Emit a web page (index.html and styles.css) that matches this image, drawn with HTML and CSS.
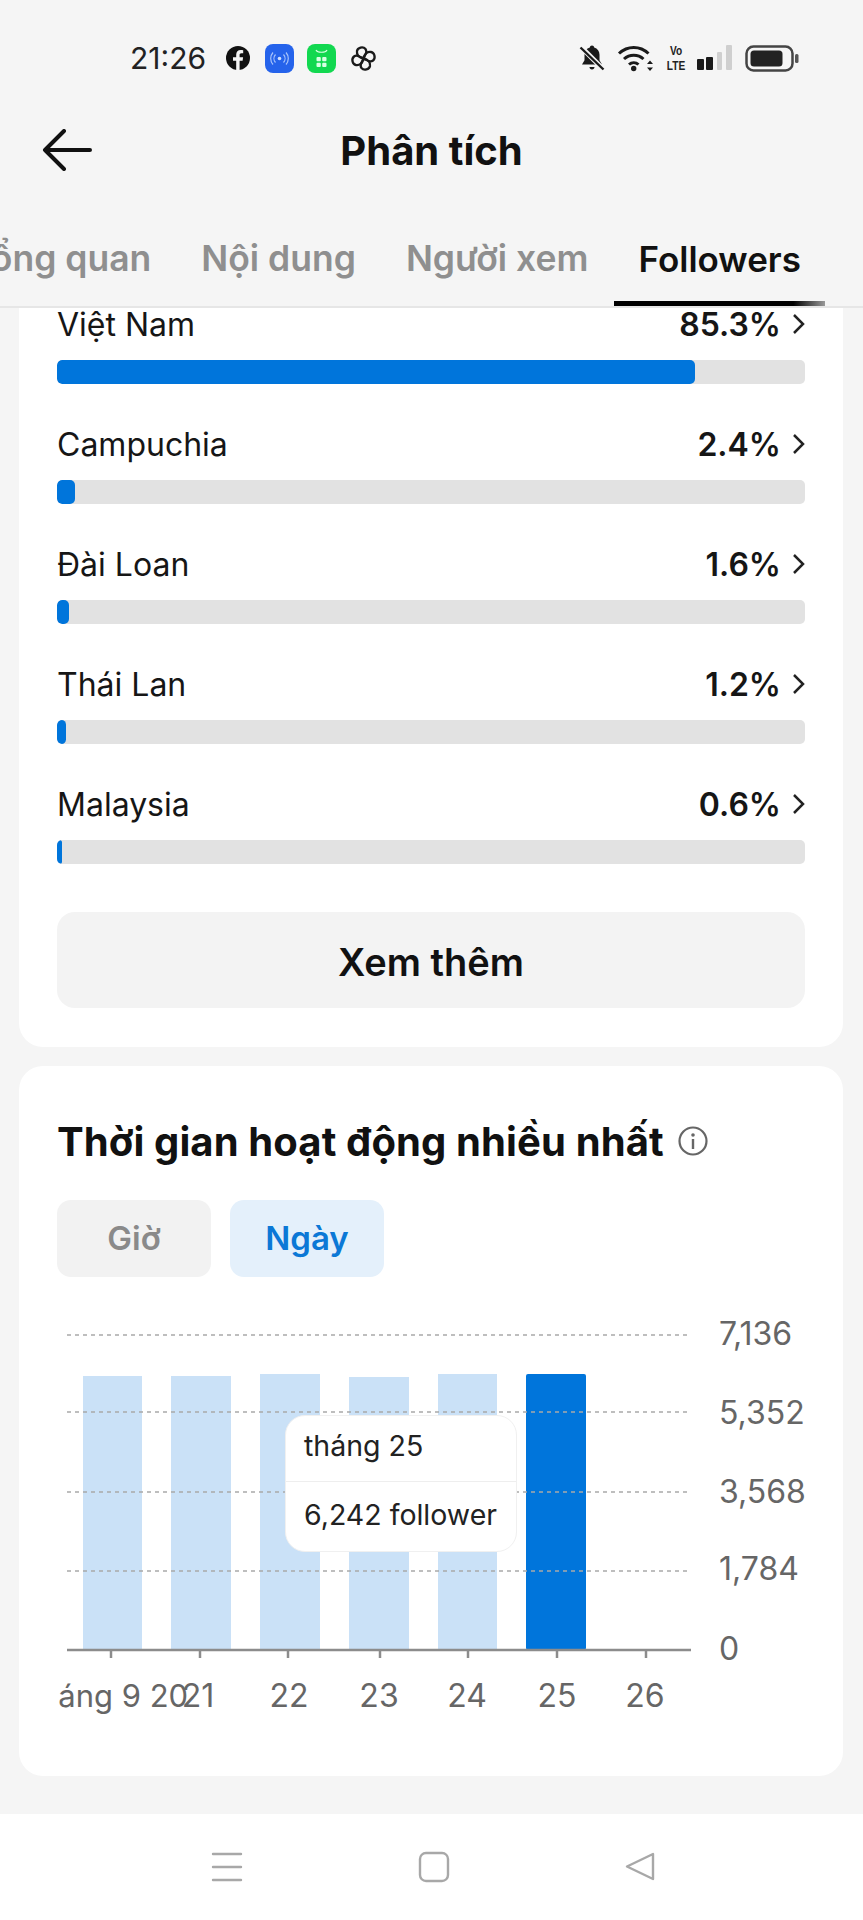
FILE: index.html
```html
<!DOCTYPE html>
<html lang="vi">
<head>
    <meta charset="UTF-8">
    <title>Phân tích</title>
    <link rel="stylesheet" href="styles.css">
</head>
<body>
<div id="phone">
    <div class="status">
        <span class="time">21:26</span>
        <svg class="ic-fb" width="24" height="24" viewBox="0 0 24 24"><circle cx="12" cy="12" r="12" fill="#111"/><path d="M13.6 24v-9.2h3l.5-3.6h-3.5V9.1c0-1.100.4-1.800 1.900-1.800h1.700V4.200c-.8-.1-1.700-.2-2.500-.2-2.800 0-4.500 1.700-4.500 4.600v2.600H7v3.600h3.200V24z" fill="#f5f5f5"/></svg>
        <svg class="ic-tile" width="29" height="29" viewBox="0 0 29 29"><rect width="29" height="29" rx="8" fill="#2563eb"/><circle cx="14.500" cy="14.500" r="1.800" fill="#cfe0ff"/><path d="M10.500 10.500a6 6 0 0 0 0 8M18.500 10.500a6 6 0 0 1 0 8M8 8.500a9 9 0 0 0 0 12M21 8.500a9 9 0 0 1 0 12" fill="none" stroke="#a9c5fb" stroke-width="1.200"/></svg>
        <svg class="ic-tile2" width="29" height="29" viewBox="0 0 29 29"><rect width="29" height="29" rx="8" fill="#12d850"/><path d="M9 6c1.500 3 9.500 3 11 0" fill="none" stroke="#d8ffe4" stroke-width="1.200"/><rect x="9.500" y="13" width="4.300" height="4.300" rx="1" fill="#d8ffe4"/><rect x="15.200" y="13" width="4.300" height="4.300" rx="1" fill="#d8ffe4"/><rect x="9.500" y="18.700" width="4.300" height="4.300" rx="1" fill="#d8ffe4"/><rect x="15.200" y="18.700" width="4.300" height="4.300" rx="1" fill="#d8ffe4"/></svg>
        <svg class="ic-pin" width="27" height="27" viewBox="0 0 27 27" fill="none" stroke="#1a1a1a" stroke-width="2.300" stroke-linejoin="round" stroke-linecap="round"><path d="M13 13C8.500 12.500 6.500 9.500 7 6c.6-3.500 6-5 8.500-2 1.800 2.300.5 5.500-2.500 9z"/><path d="M14 13c.5-4.500 3.500-6.500 7-6 3.500.6 5 6 2 8.500-2.300 1.800-5.500.5-9-2.500z"/><path d="M14 14c4.500.5 6.500 3.500 6 7-.6 3.500-6 5-8.500 2-1.800-2.300-.5-5.500 2.500-9z"/><path d="M13 14c-.5 4.500-3.500 6.500-7 6-3.500-.6-5-6-2-8.500 2.300-1.800 5.500-.5 9 2.500z"/></svg>
        <span class="status-gap"></span>
        <svg width="26" height="28" viewBox="0 0 26 28"><path d="M13 1.500c1.300 0 2 .8 2.200 1.900 3.400 1 5.300 3.700 5.300 7.300v5.500l2.500 4.300H3l2.500-4.300v-5.500c0-3.600 1.900-6.300 5.300-7.300.2-1.100.9-1.900 2.200-1.900zM10.500 23h5c0 1.500-1 2.500-2.500 2.500s-2.500-1-2.500-2.500z" fill="#1a1a1a"/><path d="M2 3l22 22" stroke="#f5f5f5" stroke-width="5"/><path d="M1.500 3.500l23 22" stroke="#1a1a1a" stroke-width="2.400"/></svg>
        <svg class="ic-wifi" width="37" height="28" viewBox="0 0 37 28" fill="none" stroke="#1a1a1a" stroke-width="3"><path d="M2 9.500c8.500-8 21-8 29.500 0"/><path d="M7 15c5.500-5 14-5 19.500 0"/><path d="M12 20.500c2.800-2.500 6.700-2.500 9.500 0"/><circle cx="16.700" cy="24.500" r="2.700" fill="#1a1a1a" stroke="none"/><path d="M33 16.500l-3 3.500h6zM33 27l-3-3.500h6z" fill="#1a1a1a" stroke="none"/></svg>
        <span class="volte"><span>Vo</span><span>LTE</span></span>
        <svg class="ic-signal" width="36" height="26" viewBox="0 0 36 26"><rect x="0" y="14" width="7" height="11" rx="1" fill="#1a1a1a"/><rect x="9" y="12" width="7" height="13" rx="1" fill="#1a1a1a"/><rect x="20" y="7" width="5" height="18" rx="1" fill="#cfcfcf"/><rect x="29" y="0" width="6" height="25" rx="1" fill="#cfcfcf"/></svg>
        <svg class="ic-batt" width="54" height="27" viewBox="0 0 54 27"><rect x="1.500" y="1.500" width="46" height="24" rx="7" fill="none" stroke="#444" stroke-width="2.500"/><rect x="5.500" y="5.500" width="32" height="16" rx="3.500" fill="#222"/><rect x="50" y="9" width="3.500" height="9" rx="1.500" fill="#555"/></svg>
    </div>

    <div class="header">
        <svg class="back" width="50" height="42" viewBox="0 0 50 42" fill="none" stroke="#111" stroke-width="4" stroke-linecap="round" stroke-linejoin="round"><path d="M22 2L3 21l19 19M3 21h45"/></svg>
        <span class="header-title">Phân tích</span>
    </div>

    <div class="tabs">
        <div class="tab">Tổng quan</div>
        <div class="tab">Nội dung</div>
        <div class="tab">Người xem</div>
        <div class="tab on">Followers</div>
    </div>

    <div class="scroll">
        <div class="card card-top">
            <ul class="rows">
                <li>
                    <div class="row-head"><span>Việt Nam</span><b>85.3%</b><svg class="chev" width="13" height="22" viewBox="0 0 13 22"><path d="M2 2l9 9-9 9"/></svg></div>
                    <div class="bar"><div class="fill" style="width:85.3%"></div></div>
                </li>
                <li>
                    <div class="row-head"><span>Campuchia</span><b>2.4%</b><svg class="chev" width="13" height="22" viewBox="0 0 13 22"><path d="M2 2l9 9-9 9"/></svg></div>
                    <div class="bar"><div class="fill" style="width:18px"></div></div>
                </li>
                <li>
                    <div class="row-head"><span>Đài Loan</span><b>1.6%</b><svg class="chev" width="13" height="22" viewBox="0 0 13 22"><path d="M2 2l9 9-9 9"/></svg></div>
                    <div class="bar"><div class="fill" style="width:12px"></div></div>
                </li>
                <li>
                    <div class="row-head"><span>Thái Lan</span><b>1.2%</b><svg class="chev" width="13" height="22" viewBox="0 0 13 22"><path d="M2 2l9 9-9 9"/></svg></div>
                    <div class="bar"><div class="fill" style="width:9px"></div></div>
                </li>
                <li>
                    <div class="row-head"><span>Malaysia</span><b>0.6%</b><svg class="chev" width="13" height="22" viewBox="0 0 13 22"><path d="M2 2l9 9-9 9"/></svg></div>
                    <div class="bar"><div class="fill" style="width:5px"></div></div>
                </li>
            </ul>
            <div class="more">Xem thêm</div>
        </div>

        <div class="card card-time">
            <div class="time-title">
                <span>Thời gian hoạt động nhiều nhất</span>
                <svg width="30" height="30" viewBox="0 0 30 30"><circle cx="15" cy="15" r="13.500" fill="none" stroke="#666" stroke-width="2.200"/><circle cx="15" cy="9" r="1.800" fill="#666"/><rect x="13.800" y="13" width="2.400" height="10" fill="#666"/></svg>
            </div>
            <div class="chips">
                <div class="chip">Giờ</div>
                <div class="chip on">Ngày</div>
            </div>
            <div class="chart">
                <svg class="plot" width="748" height="400" viewBox="57 1320 748 400">
                    <rect class="b" x="83" y="1376" width="59" height="274"/>
                    <rect class="b" x="171" y="1376" width="60" height="274"/>
                    <rect class="b" x="260" y="1374" width="60" height="276"/>
                    <rect class="b" x="349" y="1377" width="60" height="273"/>
                    <rect class="b" x="438" y="1374" width="59" height="276"/>
                    <rect class="b-on" x="526" y="1374" width="60" height="276" rx="2"/>
                    <line class="grid" x1="67" x2="688" y1="1335" y2="1335"/>
                    <line class="grid" x1="67" x2="688" y1="1412" y2="1412"/>
                    <line class="grid" x1="67" x2="688" y1="1492" y2="1492"/>
                    <line class="grid" x1="67" x2="688" y1="1571" y2="1571"/>
                    <line class="axis" x1="67" x2="691" y1="1650" y2="1650"/>
                    <line class="tick" x1="111" x2="111" y1="1650" y2="1658"/>
                    <line class="tick" x1="200" x2="200" y1="1650" y2="1658"/>
                    <line class="tick" x1="288" x2="288" y1="1650" y2="1658"/>
                    <line class="tick" x1="380" x2="380" y1="1650" y2="1658"/>
                    <line class="tick" x1="468" x2="468" y1="1650" y2="1658"/>
                    <line class="tick" x1="557" x2="557" y1="1650" y2="1658"/>
                    <line class="tick" x1="646" x2="646" y1="1650" y2="1658"/>
                    <text class="xl first" x="109" y="1707">tháng 9 20</text>
                    <text class="xl" x="198" y="1707">21</text>
                    <text class="xl" x="289" y="1707">22</text>
                    <text class="xl" x="379" y="1707">23</text>
                    <text class="xl" x="467" y="1707">24</text>
                    <text class="xl" x="557" y="1707">25</text>
                    <text class="xl" x="645" y="1707">26</text>
                    <text class="yl" x="719" y="1345">7,136</text>
                    <text class="yl" x="719" y="1424">5,352</text>
                    <text class="yl" x="719" y="1503">3,568</text>
                    <text class="yl" x="719" y="1580">1,784</text>
                    <text class="yl" x="719" y="1660">0</text>
                </svg>
                <div class="tip">
                    <div class="tip-row">tháng 25</div>
                    <div class="tip-row">6,242 follower</div>
                </div>
            </div>
        </div>
    </div>

    <div class="nav">
        <svg width="33" height="33" viewBox="0 0 33 33" fill="none" stroke="#a8a8a8" stroke-width="2.400" stroke-linecap="round"><path d="M3 3h28M3 16h28M3 29h28"/></svg>
        <svg width="33" height="33" viewBox="0 0 33 33" fill="none" stroke="#a8a8a8" stroke-width="2.400"><rect x="3" y="2" width="28" height="28" rx="6"/></svg>
        <svg width="33" height="33" viewBox="0 0 33 33" fill="none" stroke="#a8a8a8" stroke-width="2.400" stroke-linejoin="round"><path d="M29 3v25L3 15.500z"/></svg>
    </div>
</div>
</body>
</html>
```

FILE: styles.css
```css
* {
    margin: 0;
    padding: 0;
    box-sizing: border-box;
}

ul, li {
    list-style: none;
}

html, body {
    background: #f5f5f5;
}

#phone {
    width: 863px;
    height: 1920px;
    display: flex;
    flex-direction: column;
    overflow: hidden;
    font-family: Inter, "Noto Sans", "Liberation Sans", sans-serif;
    color: #161616;
    background: #f5f5f5;
}

/* status bar */
.status {
    height: 116px;
    flex-shrink: 0;
    display: flex;
    align-items: center;
    padding-left: 130px;
}

.time {
    width: 96px;
    font-size: 30px;
    color: #222;
}

.status .ic-tile {
    margin-left: 15px;
}

.status .ic-tile2 {
    margin-left: 13px;
}

.status .ic-pin {
    margin-left: 14px;
}

.status-gap {
    width: 202px;
}

.ic-wifi {
    margin-left: 12px;
}

.volte {
    display: flex;
    flex-direction: column;
    align-items: center;
    width: 20px;
    margin-left: 12px;
    font-family: "Liberation Sans", sans-serif;
    font-size: 13px;
    line-height: 15px;
    font-weight: 700;
    color: #222;
    transform: scaleX(.78);
}

.ic-signal {
    margin-left: 11px;
}

.ic-batt {
    margin-left: 12px;
}

/* header */
.header {
    height: 68px;
    flex-shrink: 0;
    position: relative;
    display: flex;
    align-items: center;
    justify-content: center;
}

.back {
    position: absolute;
    left: 42px;
    top: 13px;
}

.header-title {
    font-size: 40px;
    font-weight: 700;
    color: #111;
}

/* tabs */
.tabs {
    height: 124px;
    flex-shrink: 0;
    display: flex;
    justify-content: flex-end;
    align-items: flex-end;
    padding-right: 37px;
    border-bottom: 2px solid #e6e6e6;
    overflow: hidden;
}

.tab {
    flex-shrink: 0;
    padding: 2px 25px 0;
    height: 72px;
    font-size: 35.500px;
    font-weight: 600;
    line-height: 46px;
    white-space: nowrap;
    color: #8f8f8f;
}

.tab.on {
    font-size: 35px;
    color: #111;
}

.tab.on::after {
    content: "";
    display: block;
    height: 5px;
    margin: 19px -24px 0;
    background: linear-gradient(to right, #000 85%, #999);
}

/* scroll area */
.scroll {
    flex: 1;
    overflow: hidden;
    padding: 0 20px 0 19px;
}

.card {
    background: #fff;
    border-radius: 24px;
    padding: 0 38px;
}

.card-top {
    margin-top: -40px;
    padding-top: 37px;
    padding-bottom: 39px;
}

.rows li {
    margin-bottom: 41px;
}

.rows li:last-child {
    margin-bottom: 48px;
}

.row-head {
    height: 40px;
    display: flex;
    align-items: center;
    margin-bottom: 15px;
    padding-bottom: 2px;
    font-size: 32px;
}

.row-head span {
    flex: 1;
}

.row-head b {
    font-weight: 600;
}

.chev {
    margin-left: 11px;
    fill: none;
    stroke: #222;
    stroke-width: 2.500;
}

.bar {
    height: 24px;
    border-radius: 5px;
    background: #e2e2e2;
    overflow: hidden;
}

.fill {
    height: 100%;
    border-radius: 5px;
    background: #0075db;
}

.more {
    height: 96px;
    border-radius: 18px;
    background: #f3f3f3;
    text-align: center;
    line-height: 100px;
    font-size: 38px;
    font-weight: 600;
    color: #111;
}

/* second card */
.card-time {
    margin-top: 19px;
    height: 710px;
    padding-top: 53px;
}

.time-title {
    height: 44px;
    display: flex;
    align-items: center;
    gap: 14px;
    font-size: 40px;
    font-weight: 700;
    letter-spacing: .12px;
    color: #111;
    white-space: nowrap;
}

.chips {
    display: flex;
    gap: 19px;
    margin-top: 37px;
}

.chip {
    width: 154px;
    height: 77px;
    border-radius: 14px;
    background: #f2f2f2;
    text-align: center;
    line-height: 77px;
    font-size: 33px;
    font-weight: 600;
    color: #8a8a8a;
}

.chip.on {
    background: #e4f0fb;
    color: #0b78d6;
}

.chart {
    position: relative;
    margin-top: 43px;
}

.plot {
    display: block;
    overflow: hidden;
}

.b {
    fill: #cae1f7;
}

.b-on {
    fill: #0075db;
}

.grid {
    stroke: #a9a9a9;
    stroke-width: 1.500;
    stroke-dasharray: 4 4;
}

.axis, .tick {
    stroke: #8c8c8c;
    stroke-width: 2.500;
}

.xl, .yl {
    font-size: 32px;
    fill: #666;
}

.xl {
    text-anchor: middle;
}

.xl.first {
    font-size: 31px;
}

.tip {
    position: absolute;
    left: 228px;
    top: 95px;
    width: 232px;
    height: 137px;
    border: 1px solid #f0f0f0;
    border-radius: 20px;
    background: #fff;
    padding: 0 18px;
    font-size: 28.500px;
    color: #222;
}

.tip-row {
    height: 66px;
    line-height: 60px;
    margin: 0 -18px;
    padding: 0 18px;
    white-space: nowrap;
}

.tip-row:first-child {
    border-bottom: 1px solid #eee;
}

.tip-row + .tip-row {
    line-height: 66px;
}

/* nav bar */
.nav {
    height: 106px;
    flex-shrink: 0;
    display: flex;
    justify-content: center;
    gap: 174px;
    padding: 37px 0 0 4px;
    background: #fff;
}
```
